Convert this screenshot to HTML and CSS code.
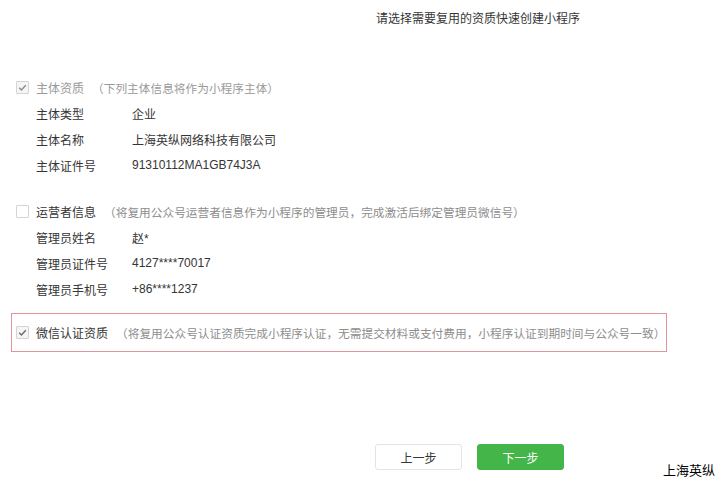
FILE: index.html
```html
<!DOCTYPE html>
<html lang="zh-CN">
<head>
<meta charset="utf-8">
<title>复用资质</title>
<link rel="stylesheet" href="styles.css">
</head>
<body>
<div class="page">
  <div class="title">请选择需要复用的资质快速创建小程序</div>

  <div class="section s1">
    <div class="head disabled">
      <span class="cb checked"><svg viewBox="0 0 13 13" width="13" height="13"><path d="M3.2 6.8 L5.4 8.9 L9.8 4.3" fill="none" stroke="#8a8a8a" stroke-width="1.4"/></svg></span>
      <span class="name">主体资质</span>
      <span class="desc">（下列主体信息将作为小程序主体）</span>
    </div>
    <div class="row"><span class="k">主体类型</span><span class="v">企业</span></div>
    <div class="row"><span class="k">主体名称</span><span class="v">上海英纵网络科技有限公司</span></div>
    <div class="row"><span class="k">主体证件号</span><span class="v">91310112MA1GB74J3A</span></div>
  </div>

  <div class="section s2">
    <div class="head">
      <span class="cb"></span>
      <span class="name">运营者信息</span>
      <span class="desc">（将复用公众号运营者信息作为小程序的管理员，完成激活后绑定管理员微信号）</span>
    </div>
    <div class="row"><span class="k">管理员姓名</span><span class="v">赵*</span></div>
    <div class="row"><span class="k">管理员证件号</span><span class="v">4127****70017</span></div>
    <div class="row"><span class="k">管理员手机号</span><span class="v">+86****1237</span></div>
  </div>

  <div class="box">
    <div class="head">
      <span class="cb checked"><svg viewBox="0 0 13 13" width="13" height="13"><path d="M3.2 6.8 L5.4 8.9 L9.8 4.3" fill="none" stroke="#6a6a6a" stroke-width="1.4"/></svg></span>
      <span class="name">微信认证资质</span>
      <span class="desc">（将复用公众号认证资质完成小程序认证，无需提交材料或支付费用，小程序认证到期时间与公众号一致）</span>
    </div>
  </div>

  <div class="footer">
    <button class="btn prev">上一步</button>
    <button class="btn next">下一步</button>
    <span class="corp">上海英纵</span>
  </div>
</div>
</body>
</html>
```
FILE: styles.css
```css
html, body {
  margin: 0;
  padding: 0;
  background: #ffffff;
}
body {
  font-family: "Liberation Sans", "Noto Sans CJK SC", sans-serif;
  font-size: 12px;
  color: #353535;
  width: 728px;
  height: 485px;
  overflow: hidden;
}
.page {
  display: flex;
  flex-direction: column;
}
.title {
  margin-top: 11px;
  padding-left: 376px;
  line-height: 16px;
  color: #353535;
}
.section {
  display: flex;
  flex-direction: column;
  padding-left: 16px;
}
.s1 { margin-top: 47px; }
.s2 { margin-top: 20px; }
.head {
  display: flex;
  align-items: center;
  height: 26px;
}
.cb {
  box-sizing: border-box;
  width: 13px;
  height: 13px;
  border: 1px solid #d4d4d4;
  background: #fff;
  border-radius: 1px;
  display: flex;
  align-items: center;
  justify-content: center;
  flex: none;
}
.cb svg { display: block; margin: -1px; }
.cb.checked { background: #f5f5f5; }
.name {
  margin-left: 7px;
  color: #353535;
}
.disabled .name { color: #9a9a9a; }
.desc {
  margin-left: 8px;
  color: #8d8d8d;
  font-size: 11.7px;
}
.disabled .desc { color: #9a9a9a; }
.row {
  display: flex;
  height: 26px;
  align-items: center;
  padding-left: 20px;
}
.row .k { width: 96px; color: #353535; }
.row .v { color: #353535; }
.box {
  margin-top: 11px;
  margin-left: 11px;
  width: 656px;
  box-sizing: border-box;
  height: 39px;
  border: 1px solid #e3939c;
  padding-left: 4px;
  display: flex;
  align-items: center;
}
.box .head { height: 36px; }
.footer {
  display: flex;
  align-items: flex-start;
  margin-top: 92px;
  padding-left: 375px;
}
.btn {
  box-sizing: border-box;
  width: 87px;
  height: 26px;
  border-radius: 3px;
  font-family: "Liberation Sans", "Noto Sans CJK SC", sans-serif;
  font-size: 12px;
  padding: 0;
  margin: 0;
}
.prev {
  background: #fff;
  border: 1px solid #e4e4e4;
  color: #353535;
}
.next {
  margin-left: 15px;
  background: #44b549;
  border: 1px solid #44b549;
  color: #fff;
}
.corp {
  margin-left: 99px;
  margin-top: 18px;
  font-size: 13px;
  line-height: 17px;
  color: #000;
}
```
